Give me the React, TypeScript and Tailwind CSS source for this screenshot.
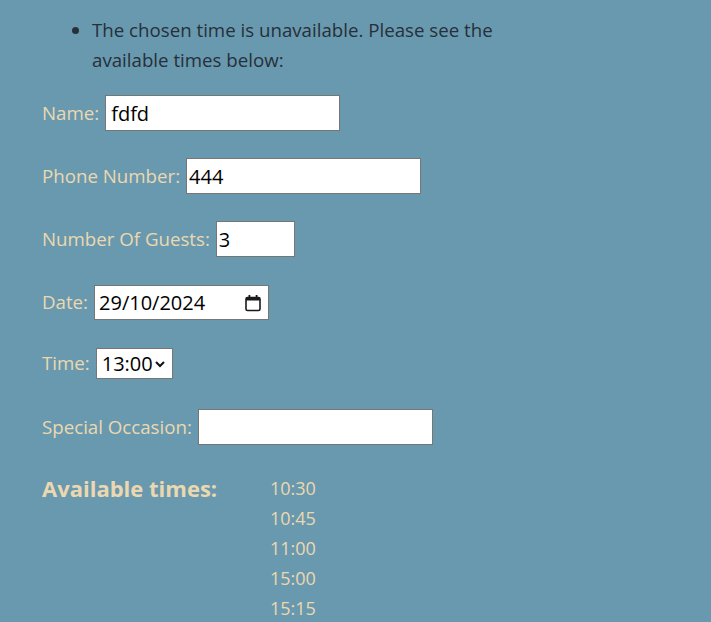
export default function App() {
  const times = ["10:30", "10:45", "11:00", "15:00", "15:15"];

  return (
    <div
      className="min-h-[622px] w-full bg-[#6999af] pl-[42px] pt-[15px] text-[18.7px] text-[#ebd8b0]"
      style={{ fontFamily: "'Open Sans', 'Noto Sans', sans-serif" }}
    >
      <ul className="list-disc pl-[50px] text-[#26303a]">
        <li className="max-w-[420px] leading-[30px]">
          The chosen time is unavailable. Please see the available times below:
        </li>
      </ul>

      <form className="mt-[20px] flex flex-col">
        <div className="flex h-[36px] items-center">
          <label className="mr-[6px]">Name:</label>
          <input
            defaultValue="fdfd"
            className="h-[36px] w-[235px] border border-[#767676] bg-white px-[5px] text-[20px] text-black outline-none"
          />
        </div>

        <div className="mt-[27px] flex h-[36px] items-center">
          <label className="mr-[6px]">Phone Number:</label>
          <input
            defaultValue="444"
            className="h-[36px] w-[235px] border border-[#767676] bg-white px-[2px] text-[20px] text-black outline-none"
          />
        </div>

        <div className="mt-[27px] flex h-[36px] items-center">
          <label className="mr-[6px]">Number Of Guests:</label>
          <input
            defaultValue="3"
            className="h-[36px] w-[79px] border border-[#767676] bg-white px-[2px] text-[20px] text-black outline-none"
          />
        </div>

        <div className="mt-[28px] flex h-[35px] items-center">
          <label className="mr-[6px]">Date:</label>
          <div className="flex h-[35px] w-[175px] items-center justify-between border border-[#767676] bg-white pl-[4px] pr-[6px] text-[20px] text-black">
            <span>29/10/2024</span>
            <svg width="18" height="18" viewBox="0 0 18 18" fill="none">
              <rect x="2" y="3.5" width="14" height="13" rx="1.5" stroke="#1a1a1a" strokeWidth="1.6" />
              <rect x="2" y="3.5" width="14" height="3" fill="#1a1a1a" />
              <rect x="4.5" y="1" width="1.8" height="3" fill="#1a1a1a" />
              <rect x="11.7" y="1" width="1.8" height="3" fill="#1a1a1a" />
            </svg>
          </div>
        </div>

        <div className="mt-[28px] flex h-[31px] items-center">
          <label className="mr-[6px]">Time:</label>
          <div className="flex h-[31px] w-[77px] items-center justify-between border border-[#767676] bg-white pl-[5px] pr-[6px] text-[20px] text-black">
            <span>13:00</span>
            <svg width="12" height="10" viewBox="0 0 12 10" fill="none">
              <path d="M2 3 L6 7 L10 3" stroke="#111" strokeWidth="2" />
            </svg>
          </div>
        </div>

        <div className="mt-[30px] flex h-[36px] items-center">
          <label className="mr-[6px]">Special Occasion:</label>
          <input className="h-[36px] w-[235px] border border-[#767676] bg-white px-[2px] text-[20px] text-black outline-none" />
        </div>
      </form>

      <div className="mt-[28px] flex">
        <h2 className="w-[228px] text-[22px] font-bold leading-[30px]">Available times:</h2>
        <ul className="text-[18px] leading-[30px]">
          {times.map((t) => (
            <li key={t}>{t}</li>
          ))}
        </ul>
      </div>
    </div>
  );
}
